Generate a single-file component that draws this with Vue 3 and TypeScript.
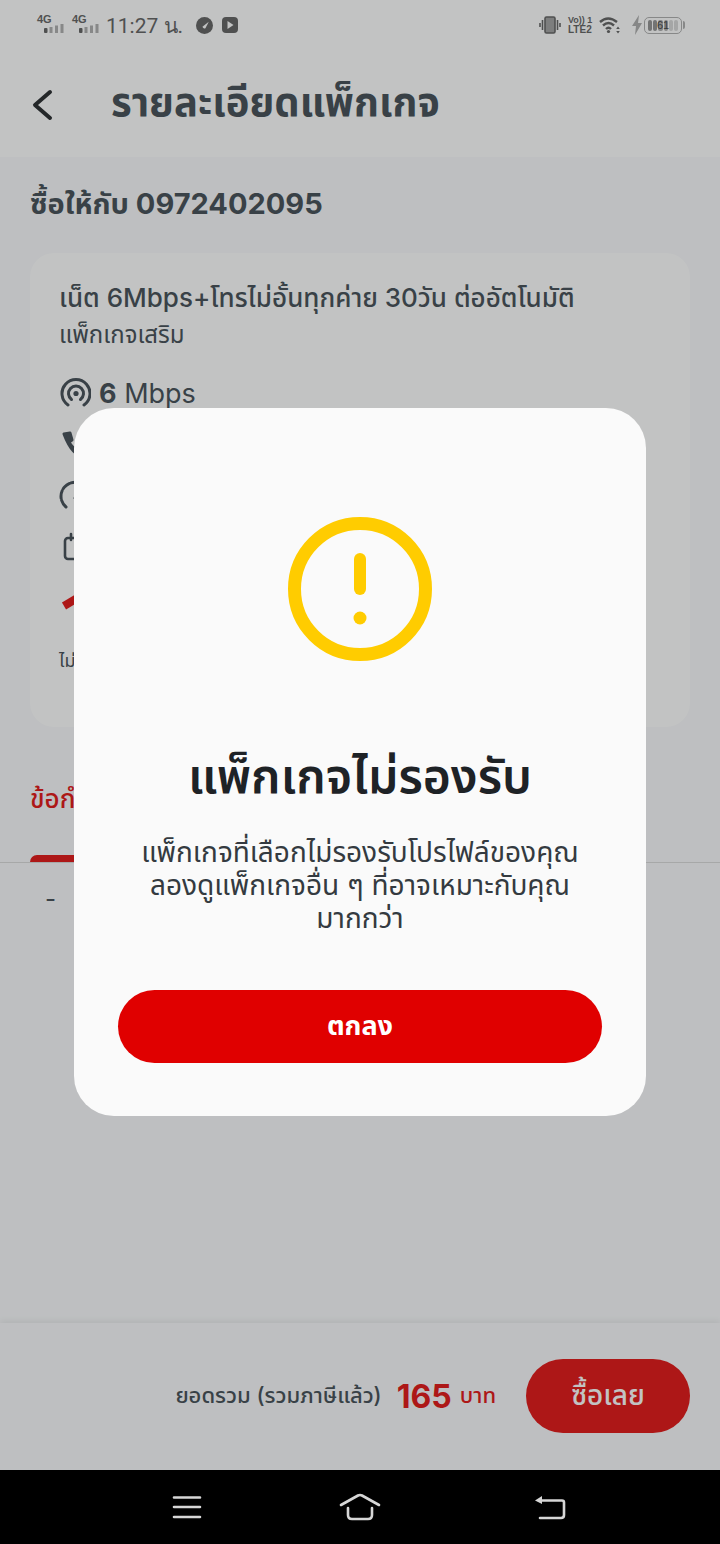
<script setup lang="ts">
const rows = [
  { id: 'speed', bold: '6', text: 'Mbps' },
  { id: 'call', bold: '', text: 'โทรไม่อั้น' },
  { id: 'gauge', bold: '', text: 'ความเร็ว' },
  { id: 'date', bold: '30', text: 'วัน' },
]
const simSlots = [0, 1]
</script>

<template>
  <div class="screen">
    <div class="page">
      <div class="top">
        <div class="status">
          <div class="status-left">
            <div v-for="s in simSlots" :key="s" class="sim">
              <span class="sim-label">4G</span>
              <svg width="20" height="9" viewBox="0 0 20 9">
                <rect x="0" y="4" width="3.5" height="5" rx="1" fill="#555" />
                <rect x="5.5" y="3" width="3" height="6" fill="#a8a8a8" />
                <rect x="11" y="1.5" width="3" height="7.5" fill="#a8a8a8" />
                <rect x="16.5" y="0" width="3" height="9" fill="#a8a8a8" />
              </svg>
            </div>
            <span class="clock">11:27 น.</span>
            <svg class="notif" width="17" height="17" viewBox="0 0 18 18">
              <circle cx="9" cy="9" r="9" fill="#555" />
              <path d="M6.8 10.4 L13.5 5 L10 11.8 Q8 13 6.8 10.4 Z" fill="#fff" />
            </svg>
            <svg class="notif" width="16" height="16" viewBox="0 0 16 16">
              <rect width="16" height="16" rx="4" fill="#555" />
              <path d="M5.5 4 L11.5 8 L5.5 12 Z" fill="#fff" />
            </svg>
          </div>
          <div class="status-right">
            <svg class="vib" width="22" height="18" viewBox="0 0 22 18" fill="none">
              <rect x="6" y="1" width="10" height="16" rx="1.5" fill="#999" stroke="#555" stroke-width="1.6" />
              <path d="M3.5 4v10M1 7v4M18.5 4v10M21 7v4" stroke="#555" stroke-width="1.6" />
            </svg>
            <div class="volte">
              <span>Vo)) 1</span>
              <span class="lte">LTE2</span>
            </div>
            <svg class="wifi" width="22" height="18" viewBox="0 0 22 18" fill="none">
              <path d="M1 6 Q9 -1 18 6" stroke="#555" stroke-width="2.4" />
              <path d="M4 9.5 Q9.5 4.5 15 9.5" stroke="#555" stroke-width="2.4" />
              <path d="M7 13 Q9.5 10.5 12 13" stroke="#555" stroke-width="2.4" />
              <circle cx="9.5" cy="15.5" r="1.6" fill="#555" />
              <path d="M19 10.5l-1.8 2.4h3.6zM19 17.5l-1.8-2.4h3.6z" fill="#555" />
            </svg>
            <svg class="bolt" width="10" height="20" viewBox="0 0 10 20">
              <path d="M7 0 L0 11 H4 L3 20 L10 8 H6 Z" fill="#a6a6a6" />
            </svg>
            <div class="battery">
              <i class="cell dark"></i>
              <i class="cell dark"></i>
              <i class="cell"></i>
              <i class="cell"></i>
              <i class="cell pale"></i>
              <i class="cell pale"></i>
              <span class="battery-text">61</span>
              <b class="battery-tip"></b>
            </div>
          </div>
        </div>
        <header class="header">
          <svg class="back" width="24" height="32" viewBox="0 0 24 32" fill="none">
            <path d="M20 3 L5 16 L20 29" stroke="#16191c" stroke-width="4" stroke-linecap="round" stroke-linejoin="round" />
          </svg>
          <h1>รายละเอียดแพ็กเกจ</h1>
        </header>
      </div>

      <main class="content">
        <h2 class="buy-for">ซื้อให้กับ 0972402095</h2>
        <section class="card">
          <div class="pack-name">เน็ต 6Mbps+โทรไม่อั้นทุกค่าย 30วัน ต่ออัตโนมัติ</div>
          <div class="pack-type">แพ็กเกจเสริม</div>
          <div class="specs">
            <div v-for="r in rows" :key="r.id" class="spec">
              <svg width="32" height="32" viewBox="0 0 32 32" fill="none" stroke="#343f48" stroke-width="3" stroke-linecap="round">
                <template v-if="r.id === 'speed'">
                  <path d="M9 27 A14 14 0 1 1 25 27" />
                  <path d="M12.5 21.5 A7.5 7.5 0 1 1 21.5 21.5" />
                  <circle cx="17" cy="15.5" r="2.6" fill="#343f48" stroke="none" />
                </template>
                <path
                  v-else-if="r.id === 'call'"
                  d="M5 5 L11 4 L13 11 L10 13 Q13 19 19 22 L21 19 L28 21 L27 27 Q14 29 5 5 Z"
                  fill="#343f48"
                  stroke-linejoin="round"
                />
                <template v-else-if="r.id === 'gauge'">
                  <path d="M7 27 A14 14 0 1 1 25 27" stroke-dasharray="8 2" />
                  <path d="M16 18 L21 10" />
                </template>
                <template v-else>
                  <rect x="6" y="7" width="24" height="21" rx="3" stroke-width="2.6" />
                  <path d="M12 3v6M24 3v6" stroke-width="2.6" />
                </template>
              </svg>
              <span class="spec-text"><b v-if="r.bold">{{ r.bold }}</b> {{ r.text }}</span>
            </div>
          </div>
          <div class="promo">
            <svg width="100" height="24" viewBox="0 0 100 24">
              <path d="M5 20 L40 -1" stroke="#e00000" stroke-width="8" />
            </svg>
          </div>
          <div class="fine">ไม่สามารถใช้ร่วมกับแพ็กเกจอื่น</div>
        </section>
        <h3 class="terms">ข้อกำหนด</h3>
        <div class="tabs">
          <div class="tab"></div>
        </div>
        <div class="dash">-</div>
      </main>

      <footer class="bottom">
        <span class="sum-label">ยอดรวม (รวมภาษีแล้ว)</span>
        <span class="price">165</span>
        <span class="baht">บาท</span>
        <button class="buy" type="button">ซื้อเลย</button>
      </footer>
    </div>

    <div class="overlay">
      <div class="modal">
        <svg class="warn" width="144" height="144" viewBox="0 0 144 144" fill="none">
          <circle cx="72" cy="72" r="65.5" stroke="#ffcc00" stroke-width="13" />
          <path d="M72 42 V72" stroke="#ffcc00" stroke-width="12" stroke-linecap="round" />
          <circle cx="72" cy="101" r="6.5" fill="#ffcc00" />
        </svg>
        <div class="modal-title">แพ็กเกจไม่รองรับ</div>
        <p class="modal-text">แพ็กเกจที่เลือกไม่รองรับโปรไฟล์ของคุณ<br />ลองดูแพ็กเกจอื่น ๆ ที่อาจเหมาะกับคุณ<br />มากกว่า</p>
        <button class="ok" type="button">ตกลง</button>
      </div>
    </div>

    <nav class="nav">
      <svg width="30" height="24" viewBox="0 0 30 24" fill="none" stroke="#d6d6d6" stroke-width="2.6" stroke-linecap="round">
        <path d="M2 2.5 H28 M2 12 H28 M2 22 H28" />
      </svg>
      <svg class="nav-home" width="42" height="28" viewBox="0 0 42 28" fill="none" stroke="#d6d6d6" stroke-width="2.6" stroke-linecap="round" stroke-linejoin="round">
        <path d="M2 12 L19 2.5 Q21 1.5 23 2.5 L40 12" />
        <path d="M9 15 V22 Q9 26 13 26 H29 Q33 26 33 22 V15" />
      </svg>
      <svg class="nav-back" width="32" height="26" viewBox="0 0 32 26" fill="none" stroke="#d6d6d6" stroke-width="2.6" stroke-linecap="round" stroke-linejoin="round">
        <path d="M5 6.5 H28 Q30 6.5 30 8.5 V21 Q30 24 27 24 H6" />
        <path d="M1 6.5 L8 2 V10 Z" fill="#d6d6d6" stroke="none" />
      </svg>
    </nav>
  </div>
</template>

<style>
body {
  margin: 0;
}
</style>

<style scoped>
.screen {
  position: relative;
  width: 720px;
  height: 1544px;
  overflow: hidden;
  display: flex;
  flex-direction: column;
  background: #000;
  font-family: Inter, "Noto Sans Thai", "Noto Sans", "Liberation Sans", sans-serif;
  color: #343f48;
}
.page {
  height: 1470px;
  display: flex;
  flex-direction: column;
  background: #f9fafc;
}
.top {
  height: 157px;
  background: #fff;
  flex: none;
}
.status {
  height: 50px;
  box-sizing: border-box;
  padding: 0 36px 0 37px;
  display: flex;
  align-items: center;
  justify-content: space-between;
  color: #555;
}
.status-left,
.status-right {
  display: flex;
  align-items: center;
}
.sim {
  width: 35px;
  display: flex;
  flex-direction: column;
  font-family: "Liberation Sans", sans-serif;
  margin-top: -3px;
}
.sim-label {
  font-size: 11px;
  line-height: 10px;
  font-weight: 700;
}
.sim svg {
  margin-left: 7px;
}
.clock {
  font-family: Roboto, "Noto Sans", sans-serif;
  font-size: 21px;
  margin-left: -1px;
  margin-right: 13px;
}
.notif {
  margin-right: 9px;
}
.vib {
  margin-right: 7px;
}
.volte {
  width: 23px;
  margin-right: 8px;
  display: flex;
  flex-direction: column;
  font-family: "Liberation Sans", sans-serif;
  font-size: 9px;
  line-height: 10px;
  font-weight: 700;
  white-space: nowrap;
}
.lte {
  font-size: 10px;
}
.wifi {
  margin-right: 11px;
}
.bolt {
  margin-right: 2px;
}
.battery {
  position: relative;
  width: 38px;
  height: 17px;
  margin-right: 2px;
  border: 1.5px solid #a8a8a8;
  border-radius: 5px;
  display: flex;
  gap: 1px;
  padding: 2px 3px;
  box-sizing: border-box;
}
.cell {
  flex: 1;
  background: #a6a6a6;
  border-radius: 2px;
}
.cell.dark {
  background: #8a8a8a;
}
.cell.pale {
  background: #d4d4d4;
}
.battery-text {
  position: absolute;
  left: 0;
  right: 0;
  top: 0;
  text-align: center;
  font-family: "Liberation Sans", sans-serif;
  font-size: 11px;
  line-height: 14px;
  color: #333;
}
.battery-tip {
  position: absolute;
  right: -4px;
  top: 3px;
  width: 2px;
  height: 8px;
  background: #a8a8a8;
  border-radius: 0 2px 2px 0;
}
.header {
  height: 107px;
  padding-left: 30px;
  display: flex;
  align-items: center;
  box-sizing: border-box;
}
.back {
  margin-top: 3px;
}
.header h1 {
  margin: -3px 0 0 57px;
  font-size: 40px;
  font-weight: 700;
  line-height: 44px;
}
.content {
  flex: 1;
  min-height: 0;
}
.buy-for {
  margin: 27px 30px 0;
  font-size: 29px;
  line-height: 40px;
  font-weight: 700;
}
.card {
  margin: 29px 30px 0;
  height: 474px;
  box-sizing: border-box;
  padding: 26px 29px 0;
  border-radius: 24px;
  background: #fff;
}
.pack-name {
  font-size: 26px;
  line-height: 38px;
  font-weight: 500;
}
.pack-type {
  font-size: 24px;
  line-height: 36px;
}
.specs {
  margin-top: 15px;
}
.spec {
  height: 51px;
  display: flex;
  align-items: center;
  gap: 8px;
  font-size: 27px;
}
.spec-text b {
  font-weight: 700;
}
.promo {
  height: 40px;
  padding-top: 14px;
  box-sizing: border-box;
}
.fine {
  margin-top: 34px;
  font-size: 18px;
  line-height: 30px;
}
.terms {
  margin: 52px 30px 0;
  font-size: 26px;
  line-height: 40px;
  font-weight: 500;
  color: #e00000;
}
.tabs {
  margin-top: 36px;
  height: 7px;
  border-bottom: 1px solid #d8d8d8;
  padding-left: 30px;
}
.tab {
  width: 200px;
  height: 7px;
  background: #e00000;
  border-radius: 8px 8px 0 0;
}
.dash {
  margin: 18px 0 0 45px;
  font-size: 24px;
  line-height: 36px;
}
.bottom {
  height: 147px;
  flex: none;
  background: #f9fafc;
  box-shadow: 0 -2px 6px rgba(0, 0, 0, 0.08);
  display: flex;
  align-items: center;
  justify-content: flex-end;
  padding-right: 30px;
}
.sum-label {
  font-size: 22px;
  font-weight: 500;
  margin-right: 15px;
}
.price {
  font-size: 32px;
  font-weight: 700;
  color: #e00000;
  margin-right: 8px;
}
.baht {
  font-size: 22px;
  font-weight: 500;
  color: #e00000;
  margin-right: 30px;
}
.buy {
  width: 164px;
  height: 74px;
  margin-top: -1px;
  border: none;
  border-radius: 37px;
  background: #e00000;
  color: #fff;
  font: inherit;
  font-size: 28px;
  font-weight: 500;
}
.overlay {
  position: absolute;
  left: 0;
  top: 0;
  width: 720px;
  height: 1470px;
  background: rgba(68, 72, 70, 0.326);
  display: flex;
  justify-content: center;
  align-items: flex-start;
  padding-top: 408px;
  box-sizing: border-box;
}
.modal {
  width: 572px;
  height: 708px;
  box-sizing: border-box;
  padding-top: 109px;
  border-radius: 40px;
  background: #fafafa;
  display: flex;
  flex-direction: column;
  align-items: center;
}
.modal-title {
  margin-top: 85px;
  font-size: 48px;
  line-height: 60px;
  font-weight: 600;
  color: #1e2226;
}
.modal-text {
  margin: 30px 0 0;
  text-align: center;
  font-size: 28px;
  line-height: 33px;
  color: #343a40;
}
.ok {
  margin-top: 55px;
  width: 484px;
  height: 73px;
  flex: none;
  border: none;
  border-radius: 37px;
  background: #e00000;
  color: #fff;
  font: inherit;
  font-size: 27px;
  font-weight: 700;
}
.nav {
  height: 74px;
  background: #000;
  display: flex;
  align-items: center;
  padding-left: 172px;
}
.nav-home {
  margin-left: 137px;
}
.nav-back {
  margin-left: 153px;
}
</style>
